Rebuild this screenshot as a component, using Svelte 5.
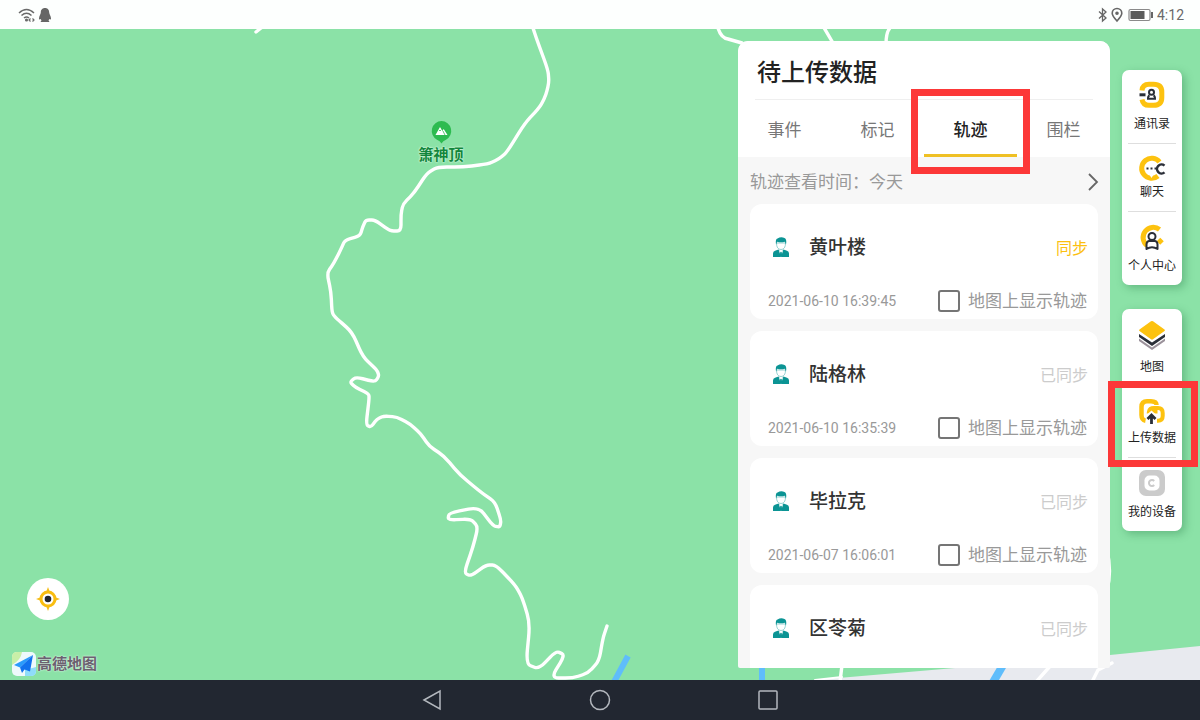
<script>
  let activeTab = $state('track');

  const tabs = [
    { id: 'event', label: '事件' },
    { id: 'mark', label: '标记' },
    { id: 'track', label: '轨迹' },
    { id: 'fence', label: '围栏' }
  ];

  let tracks = $state([
    { id: 1, name: '黄叶楼', time: '2021-06-10 16:39:45', synced: false, shown: false },
    { id: 2, name: '陆格林', time: '2021-06-10 16:35:39', synced: true, shown: false },
    { id: 3, name: '毕拉克', time: '2021-06-07 16:06:01', synced: true, shown: false },
    { id: 4, name: '区苓菊', synced: true }
  ]);

  const toolGroups = [
    [
      { id: 'contacts', label: '通讯录' },
      { id: 'chat', label: '聊天' },
      { id: 'profile', label: '个人中心' }
    ],
    [
      { id: 'layers', label: '地图' },
      { id: 'upload', label: '上传数据' },
      { id: 'device', label: '我的设备' }
    ]
  ];

  const road = [
    [531, 22], [537, 40], [548, 70], [549, 82], [546, 95], [540, 107], [525, 123], [507, 152], [499, 159],
    [488, 164], [463, 167], [438, 167], [427, 173], [414, 193], [403, 204], [401, 214], [401, 231],
    [390, 231], [375, 220], [366, 220], [363, 226], [360, 236], [345, 240], [341, 249],
    [334, 263], [327, 273], [331, 292], [332, 313], [336, 318], [352, 332], [363, 357], [377, 370],
    [379, 376], [375, 382], [356, 377], [350, 382], [355, 387], [369, 394], [369, 400], [366, 425],
    [371, 427], [377, 419], [384, 416], [397, 417], [410, 424], [421, 434], [429, 446], [444, 456],
    [460, 475], [482, 493], [495, 502], [501, 520], [500, 527], [493, 526], [479, 507], [449, 513],
    [448, 520], [471, 519], [478, 527], [473, 547], [464, 573], [471, 576], [486, 565], [496, 565],
    [515, 585], [522, 597], [530, 623], [526, 664], [539, 669], [556, 651], [565, 655], [551, 678],
    [573, 678], [588, 673], [599, 661], [603, 638], [607, 626]
  ];

  // straight segments with each corner rounded off over its last third
  function smooth(points) {
    const mix = (a, b) => [a[0] + (b[0] - a[0]) * 0.35, a[1] + (b[1] - a[1]) * 0.35];
    let d = `M${points[0]}`;
    for (let i = 1; i < points.length - 1; i++) {
      d += ` L${mix(points[i], points[i - 1])} Q${points[i]} ${mix(points[i], points[i + 1])}`;
    }
    return d + ` L${points[points.length - 1]}`;
  }
</script>

<div class="screen">
  <header class="status-bar">
    <div class="status-group">
      <svg width="18" height="16" viewBox="0 0 18 16" fill="none" stroke="#6a6a6a" stroke-width="1.5">
        <path d="M1 6Q8.500 -1 16 6M3.500 8.500Q8.500 4 13.500 8.500M6 11Q8.500 9 11 11" />
        <circle cx="8.500" cy="13" r=".8" fill="#6a6a6a" />
        <path d="M12.500 11.500L11 13l1.500 1.500M14.500 11.500L16 13l-1.500 1.500" stroke-width="1.200" />
      </svg>
      <svg width="14" height="16" viewBox="0 0 14 16" fill="#666">
        <path d="M7 1C4 1 2.800 3.200 2.800 5.500C2.800 7 1 9 1 11.500C1 13 2 12.500 2.500 12L3.500 13.300L2.500 15H11.500L10.500 13.300L11.500 12C12 12.500 13 13 13 11.500C13 9 11.200 7 11.200 5.500C11.200 3.200 10 1 7 1Z" />
      </svg>
    </div>
    <div class="status-group">
      <svg width="11" height="16" viewBox="0 0 11 16" fill="none" stroke="#666" stroke-width="1.300">
        <path d="M2 4.500L9 11L5.500 14V2L9 5L2 11.500" />
      </svg>
      <svg width="14" height="16" viewBox="0 0 14 16" fill="none" stroke="#666" stroke-width="1.600">
        <path d="M7 14C4 10.800 2.200 8.500 2.200 6.300A4.800 4.800 0 0 1 11.800 6.300C11.800 8.500 10 10.800 7 14Z" />
        <circle cx="7" cy="6.300" r="1" fill="#666" />
      </svg>
      <svg class="battery" width="26" height="16" viewBox="0 0 26 16">
        <rect x="1" y="2.500" width="21" height="11" rx="1.500" fill="#fff" stroke="#8a8a8a" stroke-width="1.200" />
        <rect x="2.500" y="4" width="14" height="8" fill="#5c5c5c" />
        <rect x="23" y="5" width="2" height="6" fill="#666" />
      </svg>
      <time class="clock">4:12</time>
    </div>
  </header>

  <main class="stage">
    <svg class="map" viewBox="0 29 1200 651" preserveAspectRatio="xMidYMid slice" aria-hidden="true">
      <rect y="29" width="1200" height="651" fill="#8be2a7" />
      <path d="M815 680L955 668L1110 655L1200 646V680Z" fill="#e8eaef" />
      <g fill="none" stroke="#fff" stroke-width="3.400" stroke-linecap="round" stroke-linejoin="round">
        <path d={smooth(road)} />
        <path d="M256 32L261 28M718 28Q721 38 728 39L742 43M823 26L833 43M892 26Q886 30 886 44" />
        <path d="M1107 550Q1112 572 1107 590M842 665L840 682M1052 664L1036 682M1112 663L1098 670L1092 682" />
        <path d="M815 680L842 677" stroke-width="2" />
      </g>
      <g fill="none" stroke="#5fbdfb" stroke-width="6">
        <path d="M628 656L614 682M762 660V682" />
        <path d="M1006 660L992 684" stroke-width="8" />
      </g>
    </svg>

    <div class="poi">
      <svg width="22" height="24" viewBox="0 0 22 24">
        <path d="M11 1A10 10 0 0 1 15.500 19.800Q12.500 21 11 23.500Q9.500 21 6.500 19.800A10 10 0 0 1 11 1Z" fill="#2dbb50" />
        <path d="M5 15L9.500 7L12 11L13.200 9L17 15Z" fill="#fff" />
        <path d="M8.500 10L9.500 11L10.700 9.800M12.500 11L14.500 15" fill="none" stroke="#2dbb50" stroke-width=".8" />
      </svg>
      <span>箫神顶</span>
    </div>

    <div class="map-corner">
      <button class="locate" aria-label="定位">
        <svg width="24" height="24" viewBox="0 0 24 24">
          <path d="M12 0L13.500 4H10.500ZM12 24L10.500 20H13.500ZM0 12L4 10.500V13.500ZM24 12L20 13.500V10.500Z" fill="#f5bd1a" />
          <circle cx="12" cy="12" r="7" fill="#fff" stroke="#f9bd10" stroke-width="3" />
          <circle cx="12" cy="12" r="3.300" fill="#22262f" />
        </svg>
      </button>
      <div class="brand">
        <svg width="24" height="24" viewBox="0 0 24 24">
          <rect width="24" height="24" rx="5" fill="#eef9fb" />
          <path d="M0 9V5Q0 0 5 0H10Q9 8 0 13Z" fill="#c9efa8" />
          <path d="M13 24V18L24 15V19Q24 24 19 24Z" fill="#8fdcfa" />
          <path d="M21 3L2 13L8 15.500Z" fill="#2a9bfb" />
          <path d="M21 3L8 15.500L10 21L12.500 17.500L18 19.500Z" fill="#1272ee" />
        </svg>
        <span>高德地图</span>
      </div>
    </div>

    <section class="panel">
      <h1>待上传数据</h1>
      <div class="tabs" role="tablist">
        {#each tabs as tab (tab.id)}
          <button
            class="tab"
            class:active={activeTab === tab.id}
            role="tab"
            aria-selected={activeTab === tab.id}
            onclick={() => (activeTab = tab.id)}
          >
            {tab.label}
          </button>
        {/each}
      </div>

      <button class="filter">
        <span>轨迹查看时间：今天</span>
        <svg width="12" height="20" viewBox="0 0 12 20" fill="none" stroke="#666" stroke-width="1.800">
          <path d="M2 2L10 10L2 18" />
        </svg>
      </button>

      <ul class="track-list">
        {#each tracks as track (track.id)}
          <li class="card">
            <div class="card-head">
              <svg width="18" height="20" viewBox="0 0 18 20">
                <path d="M1 20V16.500Q1 14.500 3 13.800L6.500 12.500L9 15L11.500 12.500L15 13.800Q17 14.500 17 16.500V20Z" fill="#0b9494" />
                <path d="M6.800 13L9 20L11.200 13L9 14.500Z" fill="#fff" />
                <path d="M8.300 15H9.700L10.200 18.500L9 20L7.800 18.500Z" fill="#0b9494" />
                <path d="M4.500 6Q4.500 12.500 9 12.500T13.500 6Z" fill="#fff" stroke="#7cc6c6" stroke-width=".8" />
                <path d="M4 7.500Q3.200 2 5.500 1.500Q9 -.8 12.500 1Q15 2 14 7.500L12.800 4.800Q9 5.800 5.200 4.800Z" fill="#0b9494" />
              </svg>
              <h2>{track.name}</h2>
              <button class="sync" class:done={track.synced} disabled={track.synced}>
                {track.synced ? '已同步' : '同步'}
              </button>
            </div>
            {#if track.time}
              <div class="card-foot">
                <time>{track.time}</time>
                <label>
                  <input type="checkbox" bind:checked={track.shown} />
                  地图上显示轨迹
                </label>
              </div>
            {/if}
          </li>
        {/each}
      </ul>
    </section>

    <aside class="toolbars">
      {#each toolGroups as group}
        <nav class="toolbar">
          {#each group as tool (tool.id)}
            <button class="tool {tool.id}">
              <svg width="28" height="28" viewBox="0 0 28 28" fill="none">
                {#if tool.id === 'contacts'}
                  <path d="M4 9.500Q4.500 3.300 11 3.300H15.500Q23.800 3.300 23.800 11V16.500Q23.800 24.300 15.500 24.300H11Q5 24.300 4 18.500" stroke="#fdc20f" stroke-width="5" />
                  <path d="M1.500 13.800H7.500" stroke="#2b2f38" stroke-width="3" />
                  <circle cx="13.500" cy="11.300" r="2.500" stroke="#2b2f38" stroke-width="2" />
                  <path d="M11.500 14.500Q10 15 10 17.700H17Q17 15 15.500 14.500" stroke="#2b2f38" stroke-width="2" />
                {:else if tool.id === 'chat'}
                  <path d="M21.500 7A10 10 0 1 0 20 21" stroke="#fdc20f" stroke-width="5" />
                  <path d="M11 19H16L13.500 23Z" fill="#fff" />
                  <path d="M8.500 13.500H10.500M12.500 13.500H14.500M16.500 13.500H18.500" stroke="#2b2f38" stroke-width="2" />
                  <path d="M26.500 10.600A4.500 4.500 0 1 0 26.500 17.400" stroke="#2b2f38" stroke-width="2.500" />
                {:else if tool.id === 'profile'}
                  <path d="M21.500 6.500A10 10 0 1 0 9 22.500M20.500 16.500L24 20" stroke="#fdc20f" stroke-width="5" />
                  <path d="M8.500 26V21.500Q8.500 18.500 11 18H17Q19.500 18.500 19.500 21.500V26Q14 22.500 8.500 26Z" fill="#fff" stroke="#2b2f38" stroke-width="2" stroke-linejoin="round" />
                  <circle cx="14" cy="13.500" r="3.500" fill="#fff" stroke="#2b2f38" stroke-width="2" />
                {:else if tool.id === 'layers'}
                  <path d="M1 18.500L14 27.500L27 18.500V21L14 30L1 21Z" fill="#9b929b" />
                  <path d="M1 14L14 22.500L27 14V17L14 26L1 17Z" fill="#2b2f38" />
                  <path d="M13 1.200Q14 .6 15 1.200L26.500 9.500Q27.500 10.300 26.500 11L15 19.300Q14 20 13 19.300L1.500 11Q.5 10.300 1.500 9.500Z" fill="#fdc20f" />
                {:else if tool.id === 'upload'}
                  <path d="M7.500 22.700Q3.500 22 3.500 17V9Q3.500 3.200 9 3.200H13Q18.500 3.200 18.500 7" stroke="#fdc20f" stroke-width="4.500" />
                  <path d="M19 22.700H20Q24.700 22.700 24.700 18V15Q24.700 10 20 10H16Q11.500 10 11 13.500H19.500" stroke="#fdc20f" stroke-width="4" />
                  <path d="M8.500 17L13.500 12.500L19 17.500V20H8.500Z" fill="#fff" />
                  <path d="M13.500 26V18M9.500 21L13.500 17L17.500 21" stroke="#2b2f38" stroke-width="2.800" />
                {:else}
                  <rect x="1" y="1" width="26" height="26" rx="7" fill="#cbcbcb" />
                  <rect x="6.500" y="6.500" width="15" height="15" rx="5" fill="#fff" />
                  <path d="M16.200 12A3 3 0 1 0 16.200 16" stroke="#cbcbcb" stroke-width="2" />
                {/if}
              </svg>
              <span>{tool.label}</span>
            </button>
          {/each}
        </nav>
      {/each}
    </aside>
  </main>

  <footer class="nav-bar">
    <button aria-label="返回">
      <svg width="24" height="24" viewBox="0 0 24 24"><path d="M4 12L20 3V21Z" /></svg>
    </button>
    <button aria-label="主页">
      <svg width="24" height="24" viewBox="0 0 24 24"><circle cx="12" cy="12" r="9.500" /></svg>
    </button>
    <button aria-label="最近任务">
      <svg width="24" height="24" viewBox="0 0 24 24"><rect x="3" y="3" width="18" height="18" rx="1" /></svg>
    </button>
  </footer>
</div>

<style>
  :global(body) {
    margin: 0;
  }

  .screen {
    display: flex;
    flex-direction: column;
    height: 100vh;
    overflow: hidden;
    font-family: Roboto, 'Noto Sans CJK SC', sans-serif;
    color: #222;
  }

  button {
    padding: 0;
    border: 0;
    background: none;
    font: inherit;
    color: inherit;
    cursor: pointer;
  }

  svg {
    display: block;
    flex: none;
    overflow: visible;
  }

  .status-bar {
    display: flex;
    justify-content: space-between;
    align-items: center;
    height: 29px;
    padding: 0 16px 0 18px;
    background: #fdfffe;
  }

  .status-group {
    display: flex;
    align-items: center;
    gap: 2px;
  }

  .battery { margin-left: 2px; }

  .clock {
    margin-left: 1px;
    font-size: 14px;
    line-height: 16px;
    color: #6a6a6a;
  }

  .stage {
    position: relative;
    flex: 1;
    min-height: 0;
    display: flex;
    justify-content: flex-end;
    gap: 12px;
    padding: 12px 18px 12px 12px;
    background: #8be2a7;
  }

  .map {
    position: absolute;
    inset: 0;
    width: 100%;
    height: 100%;
    overflow: hidden;
  }

  .poi {
    position: absolute;
    left: 441px;
    top: 91px;
    transform: translateX(-50%);
    display: flex;
    flex-direction: column;
    align-items: center;
    font-size: 15px;
    font-weight: 700;
    line-height: 22px;
    color: #12863c;
    text-shadow: 0 0 2px #d8f7e0, 0 0 2px #d8f7e0;
  }

  .map-corner {
    position: relative;
    display: flex;
    flex-direction: column;
    justify-content: flex-end;
    gap: 32px;
    margin: 0 auto -8px 0;
  }

  .locate {
    display: grid;
    place-items: center;
    width: 42px;
    height: 42px;
    margin-left: 15px;
    border-radius: 50%;
    background: #fff;
  }

  .brand {
    display: flex;
    align-items: center;
    gap: 1px;
    font-size: 15px;
    line-height: 24px;
    color: #6b6170;
    font-weight: 700;
    text-shadow: 0 0 2px #fff;
  }

  .panel {
    position: relative;
    display: flex;
    flex-direction: column;
    width: 372px;
    border-radius: 10px 10px 2px 2px;
    background: #f7f7f7;
  }

  h1 {
    margin: 0;
    padding: 14px 19px 8px;
    border-radius: 10px 10px 0 0;
    background: #fff;
    font-size: 24px;
    font-weight: 500;
    line-height: 36px;
  }

  .tabs {
    position: relative;
    display: flex;
    background: #fff;
  }

  .tabs::before {
    content: '';
    position: absolute;
    top: 0;
    left: 17px;
    right: 17px;
    height: 1px;
    background: #efefef;
  }

  .tab {
    position: relative;
    flex: 1;
    padding: 20px 0 13px;
    border-bottom: 3px solid transparent;
    font-size: 17px;
    line-height: 22px;
    color: #777;
  }

  .tab.active {
    border-color: #efc024;
    font-weight: 500;
    color: #222;
  }

  /* callout frames round the current tab and tool */
  .tab.active::after,
  .upload::after {
    content: '';
    position: absolute;
    z-index: 2;
    border: 7px solid #fc3838;
    pointer-events: none;
  }

  .tab.active::after { inset: -10px -13px -20px; }

  .upload::after { inset: -6px -16px -10px -14px; }

  .filter {
    display: flex;
    justify-content: space-between;
    align-items: center;
    padding: 14px 11px 11px 12px;
    font-size: 17px;
    line-height: 22px;
    color: #999;
  }

  .track-list {
    flex: 1;
    min-height: 0;
    display: flex;
    flex-direction: column;
    gap: 12px;
    margin: 0;
    padding: 0 12px;
    overflow: hidden;
    list-style: none;
  }

  .card {
    flex: none;
    border-radius: 12px;
    background: #fff;
  }

  .card:last-child {
    flex: 1 0 auto;
    border-radius: 12px 12px 0 0;
  }

  .card-head {
    display: flex;
    align-items: center;
    padding: 28px 10px 24px 22px;
  }

  h2 {
    margin: 0 auto 0 19px;
    padding-top: 2px;
    font-size: 19px;
    font-weight: 500;
    line-height: 28px;
    color: #333;
  }

  .sync {
    padding-top: 4px;
    font-size: 16px;
    line-height: 24px;
    color: #fcc010;
  }

  .sync.done {
    color: #ccc;
    cursor: default;
  }

  .card-foot {
    display: flex;
    justify-content: space-between;
    align-items: center;
    padding: 2px 11px 5px 18px;
    font-size: 14px;
    line-height: 26px;
    color: #999;
  }

  label {
    display: flex;
    align-items: center;
    gap: 8px;
    font-size: 17px;
  }

  input {
    appearance: none;
    width: 22px;
    height: 22px;
    margin: 0;
    border: 2px solid #757575;
    border-radius: 3px;
    background: #fff;
  }

  input:checked { background: #fcc010; }

  .toolbars {
    position: relative;
    display: flex;
    flex-direction: column;
    gap: 24px;
    padding-top: 29px;
  }

  .toolbar {
    display: flex;
    flex-direction: column;
    width: 60px;
    border-radius: 7px;
    background: #fff;
    box-shadow: 3px 3px 8px rgba(30, 110, 60, 0.35);
  }

  .tool {
    position: relative;
    display: flex;
    flex-direction: column;
    align-items: center;
    gap: 7px;
    padding: 11px 0;
    font-size: 12px;
    line-height: 16px;
  }

  .tool + .tool { margin-top: 1px; }

  .tool + .tool::before {
    content: '';
    position: absolute;
    top: -1px;
    left: 6px;
    right: 6px;
    height: 1px;
    background: #dedede;
  }

  .chat { gap: 1px; }
  .layers { gap: 11px; }
  .upload { gap: 4px; }

  .nav-bar {
    display: flex;
    justify-content: center;
    align-items: center;
    gap: 144px;
    height: 40px;
    background: #222731;
  }

  .nav-bar svg {
    fill: none;
    stroke: #b4b8be;
    stroke-width: 1.5px;
  }
</style>
